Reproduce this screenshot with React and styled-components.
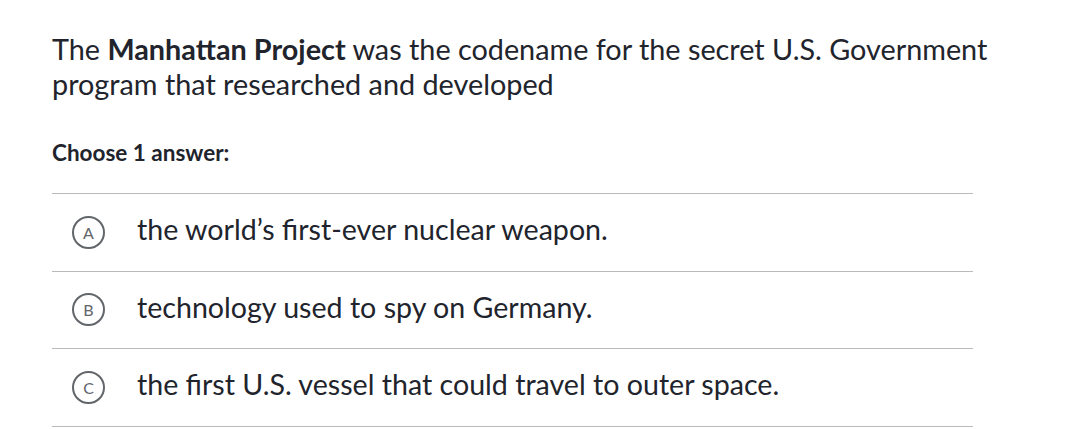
import styled, { createGlobalStyle } from "styled-components";

const GlobalStyle = createGlobalStyle`
  body {
    margin: 0;
    background: #ffffff;
    font-family: Lato, "Noto Sans", sans-serif;
    color: #21242c;
  }
`;

const Page = styled.div`
  padding: 32px 0 0 52px;
`;

const Question = styled.p`
  margin: 0;
  max-width: 960px;
  font-size: 28.8px;
  line-height: 35px;
  color: #21242c;
`;

const Prompt = styled.div`
  margin-top: 37px;
  font-size: 22.5px;
  font-weight: 700;
  line-height: 27px;
`;

const Choices = styled.ul`
  list-style: none;
  width: 921px;
  margin: 27px 0 0;
  padding: 0;
  border-top: 1px solid #bababe;
`;

const Choice = styled.li`
  display: flex;
  align-items: center;
  gap: 32px;
  height: 76.5px;
  padding-left: 20px;
  border-bottom: 1px solid #bababe;
`;

const Letter = styled.span`
  flex: none;
  display: flex;
  align-items: center;
  justify-content: center;
  box-sizing: border-box;
  width: 33px;
  height: 33px;
  border: 2.5px solid #626569;
  border-radius: 50%;
  font-size: 16px;
  color: #626569;
`;

const ChoiceText = styled.span`
  padding-bottom: 6px;
  font-size: 28.6px;
  line-height: 34px;
`;

const answers = [
  { key: "A", text: "the world’s first-ever nuclear weapon." },
  { key: "B", text: "technology used to spy on Germany." },
  { key: "C", text: "the first U.S. vessel that could travel to outer space." },
];

export default function App() {
  return (
    <>
      <GlobalStyle />
      <Page>
        <Question>
          The <strong>Manhattan Project</strong> was the codename for the secret
          U.S. Government program that researched and developed
        </Question>
        <Prompt>Choose 1 answer:</Prompt>
        <Choices>
          {answers.map((a) => (
            <Choice key={a.key}>
              <Letter>{a.key}</Letter>
              <ChoiceText>{a.text}</ChoiceText>
            </Choice>
          ))}
        </Choices>
      </Page>
    </>
  );
}
